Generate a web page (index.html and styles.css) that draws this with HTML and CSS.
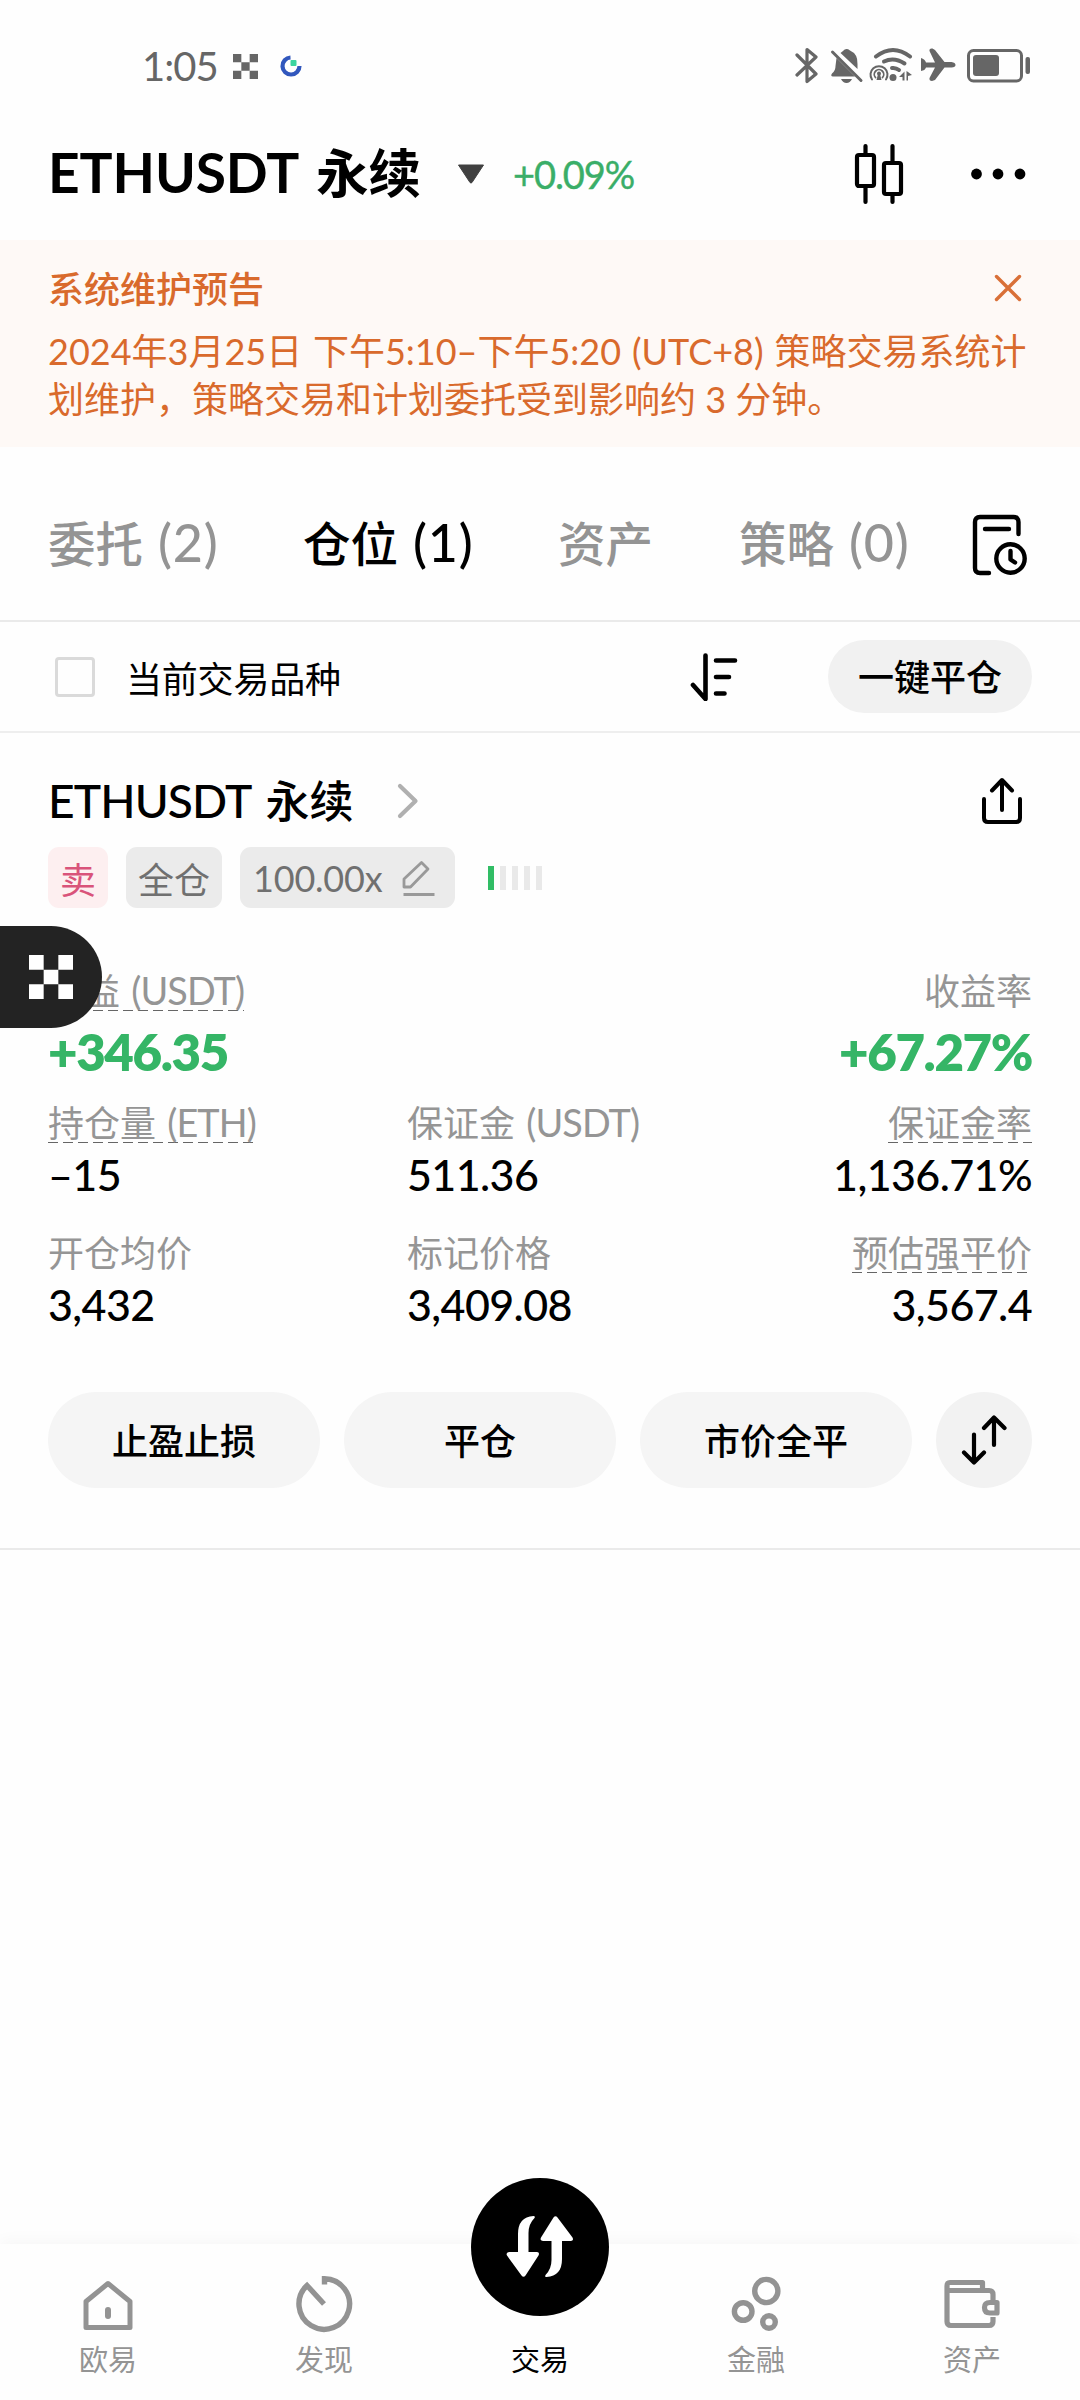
FILE: index.html
```html
<!DOCTYPE html>
<html lang="zh-CN">
<head>
<meta charset="utf-8">
<title>ETHUSDT 永续</title>
<link rel="stylesheet" href="styles.css">
</head>
<body>
<div class="app">
  <div class="status">
    <div class="status-left">
      <span class="clock">1:05</span>
      <svg class="okx-mini" width="25" height="25" viewBox="0 0 3 3" fill="#666"><path d="M0 0h1v1H0zM2 0h1v1H2zM1 1h1v1H1zM0 2h1v1H0zM2 2h1v1H2z"/></svg>
      <svg width="22" height="22" viewBox="0 0 22 22"><path d="M10.500 2.500A8.500 8.500 0 1 0 19.500 11" fill="none" stroke="#3157bd" stroke-width="4.200"/><rect x="10.500" y="5" width="6" height="6" rx="1" fill="#3bd4a0"/></svg>
    </div>
    <svg class="status-icons" width="236" height="38" viewBox="795 46 236 38" fill="#666">
      <path d="M797 55L816 74L807 81.500V49.500L816 57L797 75" fill="none" stroke="#666" stroke-width="3.200" stroke-linejoin="round" stroke-linecap="round"/>
      <path d="M843 51Q846 47.500 850 50.500Q858 54 857.500 64V69L840.500 53ZM836.500 58L855 76.500H833Q830 76 832 73.500Q835.500 71 835.500 66Z"/>
      <path d="M832.500 52L861 80.500" stroke="#666" stroke-width="3" stroke-linecap="round"/>
      <path d="M841 79H852Q850 83 846.500 83Q843 83 841 79Z"/>
      <g fill="none" stroke="#666" stroke-linecap="round">
        <path d="M876 56.500Q893 43.500 910 56.500" stroke-width="4"/>
        <path d="M884 61.500Q894 56.500 904.500 63.500" stroke-width="4"/>
        <path d="M892 68Q896 67.500 899 70" stroke-width="4"/>
        <path d="M872 79.500A8.500 8.500 0 1 1 886 79.500" stroke-width="2"/>
        <path d="M875.500 77.500A4.700 4.700 0 1 1 882.500 77.500" stroke-width="1.800"/>
      </g>
      <circle cx="879" cy="73.500" r="2"/><path d="M878 74h2l1.500 6h-5z"/><circle cx="893" cy="77.500" r="3.500"/>
      <path d="M899 77L904.500 71.500V80.500H902.500V77ZM906.500 71V80.500L908 80.500V76L912 75L908 72Z"/>
      <path d="M921 58Q925 59 926 62.500H935L929.500 51Q929 48 932.500 48.500L935 50L944.500 62H951.500Q955.500 62.500 955.500 65Q955.500 67 951.500 67.500H944.500L935 80L932 81Q929 81 929.500 78L935 67.500H926Q925 70.500 921 71Z"/>
      <rect x="968.500" y="50.500" width="53" height="30.500" rx="5" fill="none" stroke="#666" stroke-width="3"/>
      <rect x="973" y="55" width="26" height="21" rx="3"/><rect x="1025.500" y="57" width="4.500" height="17" rx="2"/>
    </svg>
  </div>

  <header class="header">
    <h1 class="pair"><span class="lat">ETHUSDT</span> 永续</h1>
    <svg class="caret" width="28" height="20" viewBox="0 0 28 20"><path d="M1.500 1h25L15 18.500q-1 1-2 0z" fill="#404040" stroke="#404040" stroke-linejoin="round"/></svg>
    <span class="change">+0.09%</span>
    <svg class="candles" width="50" height="62" viewBox="0 0 50 62" fill="none" stroke="#000" stroke-width="4.200" stroke-linecap="round"><rect x="3" y="12" width="17" height="31" rx="2"/><rect x="30" y="20" width="17" height="31" rx="2"/><path d="M11.500 3v9M11.500 43v16M38.500 3v17M38.500 51v8"/></svg>
    <svg class="more" width="56" height="12" viewBox="0 0 56 12"><circle cx="6.500" cy="6" r="5.400"/><circle cx="28" cy="6" r="5.400"/><circle cx="50" cy="6" r="5.400"/></svg>
  </header>

  <section class="notice">
    <div class="notice-head">
      <h2>系统维护预告</h2>
      <svg width="28" height="28" viewBox="0 0 28 28" fill="none" stroke="#d97038" stroke-width="3.400" stroke-linecap="round"><path d="M2.500 2.500l23 23M25.500 2.500l-23 23"/></svg>
    </div>
    <p><span class="line line-a">2024年3月25日 下午5:10–下午5:20 (UTC+8) 策略交易系统计</span><span class="line line-b">划维护，策略交易和计划委托受到影响约 3 分钟。</span></p>
  </section>

  <nav class="tabs">
    <span class="tab counted">委托 <span class="count">(2)</span></span>
    <span class="tab counted active">仓位 <span class="count">(1)</span></span>
    <span class="tab">资产</span>
    <span class="tab counted">策略 <span class="count">(0)</span></span>
    <svg class="history" width="56" height="62" viewBox="0 0 56 62" fill="none" stroke="#000" stroke-width="4.400" stroke-linecap="round" stroke-linejoin="round"><path d="M46.500 20V8q0-5-5-5H8Q3 3 3 8v46q0 5 5 5h9M13 15h24"/><circle cx="38.500" cy="44.500" r="14.200"/><path d="M38.500 37v8.500l4.500 3"/></svg>
  </nav>

  <div class="filter">
    <span class="checkbox"></span>
    <span class="filter-label">当前交易品种</span>
    <svg class="sort" width="48" height="48" viewBox="0 0 48 48" fill="none" stroke="#000" stroke-width="4.600" stroke-linecap="round" stroke-linejoin="round"><path d="M3 32l12.500 14V2.500M26 7.500h19M26 24h13M26 40.500h8.500"/></svg>
    <button class="close-all">一键平仓</button>
  </div>

  <section class="position">
    <div class="pos-head">
      <h3><span class="lat">ETHUSDT</span> 永续</h3>
      <svg class="chev" width="22" height="36" viewBox="0 0 22 36" fill="none" stroke="#b0b0b0" stroke-width="4.200" stroke-linecap="round" stroke-linejoin="round"><path d="M3 3l15.500 15L3 33"/></svg>
      <svg class="share" width="42" height="48" viewBox="0 0 42 48" fill="none" stroke="#000" stroke-width="4" stroke-linecap="round" stroke-linejoin="round"><path d="M3 22v19q0 4 4 4h28q4 0 4-4V22M21 33V3.500M11 13.500l10-10.500 10 10.500"/></svg>
    </div>

    <div class="tags">
      <span class="tag sell">卖</span>
      <span class="tag">全仓</span>
      <span class="tag lever"><span class="lever-num">100.00x</span>
        <svg width="34" height="38" viewBox="0 0 34 38" fill="none" stroke="#999" stroke-width="2.800" stroke-linejoin="round"><path d="M2 28v-8L19.500 3.500l6.500 6.500L8.500 28zM1.500 35.500h31"/></svg></span>
      <span class="risk"><i class="on"></i><i></i><i></i><i></i><i></i></span>
    </div>

    <div class="grid">
      <div class="cell wide"><span class="label dash">收益 <span class="lat">(USDT)</span></span><b class="pnl">+346.35</b></div>
      <div class="cell right"><span class="label">收益率</span><b class="pnl">+67.27%</b></div>
      <div class="cell"><span class="label dash">持仓量 <span class="lat">(ETH)</span></span><span class="value">–15</span></div>
      <div class="cell"><span class="label">保证金 <span class="lat">(USDT)</span></span><span class="value">511.36</span></div>
      <div class="cell right"><span class="label dash">保证金率</span><span class="value">1,136.71%</span></div>
      <div class="cell"><span class="label">开仓均价</span><span class="value">3,432</span></div>
      <div class="cell"><span class="label">标记价格</span><span class="value">3,409.08</span></div>
      <div class="cell right"><span class="label dash">预估强平价</span><span class="value">3,567.4</span></div>
    </div>

    <div class="actions">
      <button>止盈止损</button>
      <button>平仓</button>
      <button>市价全平</button>
      <button class="flip" aria-label="反手"><svg width="46" height="52" viewBox="0 0 46 52" fill="none" stroke="#000" stroke-width="4.200" stroke-linecap="round" stroke-linejoin="round"><path d="M13 20.500V48M3 38.500L13 48.500l10-10M33 31V4M23 14L33 3.500 43.500 14"/></svg></button>
    </div>
  </section>

  <div class="float"><svg width="44" height="44" viewBox="0 0 3 3" fill="#fff"><path d="M0 0h1v1H0zM2 0h1v1H2zM1 1h1v1H1zM0 2h1v1H0zM2 2h1v1H2z"/></svg></div>

  <footer class="bottom">
    <div class="item">
      <svg width="60" height="60" viewBox="78 2274 60 60" fill="none" stroke="#939393" stroke-width="5" stroke-linejoin="round"><path d="M86 2301.500L108 2283.500L130 2301.500V2327.500H86Z"/><path d="M108 2310v6" stroke-width="6" stroke-linecap="round"/></svg>
      <span>欧易</span>
    </div>
    <div class="item">
      <svg width="60" height="60" viewBox="294 2274 60 60" fill="none" stroke="#939393" stroke-width="5.400"><path d="M324.500 2284.500V2278.700A25.300 25.300 0 1 1 307 2285.500L324 2304"/></svg>
      <span>发现</span>
    </div>
    <div class="item main">
      <span class="trade"><svg width="138" height="138" viewBox="471 2178 138 138" fill="#fff"><path d="M518 2252V2234Q518 2217 533.500 2216Q535.500 2216 534.500 2218Q528.500 2224 528.500 2233V2252H537Q540 2252.500 538.500 2255.500L525.500 2275.500Q523.500 2278 521.500 2275.500L507 2255.500Q505.500 2252.500 509 2252Z"/><path d="M551.500 2241V2260Q551.500 2269 545.500 2275Q544.500 2277 546.500 2277Q562 2276 562 2259V2241H571Q574 2240.500 572.500 2237.500L557.500 2217.500Q555.500 2215 553.500 2217.500L541 2237.500Q539.500 2240.500 543 2241Z"/></svg></span>
      <span>交易</span>
    </div>
    <div class="item">
      <svg width="60" height="60" viewBox="726 2274 60 60" fill="none" stroke="#939393" stroke-width="5.400"><circle cx="766.300" cy="2291" r="11.600"/><circle cx="743.200" cy="2311.500" r="8.800"/><circle cx="769" cy="2322" r="6.300"/></svg>
      <span>金融</span>
    </div>
    <div class="item">
      <svg width="60" height="60" viewBox="942 2274 60 60" fill="none" stroke="#939393" stroke-width="5.200" stroke-linejoin="round"><path d="M982.500 2289V2282.500H950Q947 2282.500 947 2286V2321.500Q947 2325.500 951 2325.500H989Q993 2325.500 993 2321.500V2317M993 2300V2294.500Q993 2290.500 989 2290.500H947"/><path d="M997 2302.500H990Q984.500 2302.500 984.500 2307.500Q984.500 2313 990 2313H997Z"/></svg>
      <span>资产</span>
    </div>
  </footer>
</div>
</body>
</html>
```
FILE: styles.css
```css
* { box-sizing: border-box; margin: 0; padding: 0; }
body { background: #fff; color: #000; font-family: Lato, "Noto Sans CJK SC", sans-serif; font-size: 36px; }
svg { display: block; flex: none; }
button { border: 0; font: inherit; color: inherit; white-space: nowrap; }
.app { position: relative; display: flex; flex-direction: column; width: 1080px; height: 2400px; overflow: hidden; background: #fefefe; white-space: nowrap; }
.lat { font-size: 1.05em; line-height: 0; }

.status { display: flex; justify-content: space-between; height: 108px; padding: 46px 49px 0 142px; }
.status-left { display: flex; align-items: center; height: 40px; color: #666; }
.clock { width: 91px; font-size: 40px; line-height: 40px; letter-spacing: -1px; }
.okx-mini { margin-right: 22px; }

.header { display: flex; align-items: center; height: 132px; padding-left: 48px; }
.pair { width: 409px; padding-bottom: 2px; font-size: 52.500px; font-weight: 700; line-height: 60px; word-spacing: 4px; }
.pair .lat { letter-spacing: -.1px; }
.caret { margin-right: 28px; }
.change { width: 341px; font-size: 38px; color: #3aae68; letter-spacing: -1.100px; -webkit-text-stroke: .4px; }
.candles { margin-right: 66px; }

.notice { height: 207px; padding: 24px 48px 0; background: #fef9f6; color: #d96a2c; }
.notice-head { display: flex; justify-content: space-between; align-items: center; height: 48px; padding-right: 10px; }
.notice h2 { padding-bottom: 2px; font-size: 36px; font-weight: 500; }
.notice p { padding-top: 15px; line-height: 48px; }
.line { display: block; }
.line-a { word-spacing: 1.600px; }

.tabs { display: flex; align-items: center; gap: 84px; height: 173px; padding: 16px 48px 0; font-size: 47.500px; font-weight: 500; color: #949494; }
.tab { width: 97px; }
.tab.counted { width: 171px; word-spacing: 3px; }
.count { font-size: 52px; line-height: 0; letter-spacing: .8px; }
.tab.active { color: #000; }
.history { margin: 7px 0 0 -22px; }

.filter { display: flex; align-items: center; height: 113px; padding: 0 48px 0 55px; border-top: 2px solid #eaeaea; border-bottom: 2px solid #eee; }
.checkbox { width: 40px; height: 40px; margin-right: 31px; border: 3px solid #dadada; border-radius: 4px; }
.filter-label { width: 564px; letter-spacing: -.2px; }
.sort { margin-right: 90px; }
.close-all { width: 204px; height: 73px; padding-bottom: 3px; border-radius: 37px; background: #f1f1f1; font-weight: 500; }

.position { height: 817px; padding: 40px 48px 0; border-bottom: 2px solid #eaeaea; }
.pos-head { display: flex; align-items: center; height: 56px; }
.pos-head h3 { width: 349px; padding-bottom: 4px; font-size: 44px; font-weight: 500; word-spacing: 3px; }
.pos-head .lat { letter-spacing: -.900px; }
.share { margin-left: auto; margin-right: 9px; }
.tags { display: flex; align-items: center; height: 61px; margin-top: 18px; gap: 18px; color: #707070; }
.tag { display: flex; align-items: center; justify-content: center; height: 61px; padding: 0 12px; border-radius: 11px; background: #ebebeb; }
.sell { background: #fdeff0; color: #d9537a; }
.lever { width: 215px; justify-content: space-between; padding: 0 19px 0 13px; }
.lever-num { letter-spacing: -.200px; }
.risk { display: flex; gap: 6px; margin-left: 15px; }
.risk i { width: 6px; height: 24px; background: #e9e9e9; }
.risk .on { background: #31bd65; }

.grid { display: grid; grid-template-columns: 359px 300px 1fr; grid-template-rows: 132px 130px 130px; margin-top: 59px; }
.cell { display: flex; flex-direction: column; align-items: flex-start; }
.cell.wide { grid-column: span 2; }
.cell.right { align-items: flex-end; }
.label { height: 44px; line-height: 48px; color: #959595; word-spacing: 2px; }
.label .lat { letter-spacing: -.900px; }
.dash { background: repeating-linear-gradient(90deg, #666 0 10px, transparent 10px 15px) left bottom / 100% 1px no-repeat; }
.pnl { margin-top: 13px; font-size: 51px; line-height: 56px; font-weight: 800; letter-spacing: -1.400px; color: #35b566; }
.value { margin-top: 10px; font-size: 43px; line-height: 44px; font-weight: 500; letter-spacing: -.600px; }

.actions { display: flex; gap: 24px; margin-top: 33px; }
.actions button { flex: 1; height: 96px; padding-bottom: 3px; border-radius: 48px; background: #f5f5f5; font-weight: 500; }
.actions .flip { flex: 0 0 96px; display: flex; align-items: center; justify-content: center; padding: 0; background: #f2f2f2; }

.float { position: absolute; left: 0; top: 926px; display: flex; align-items: center; width: 102px; height: 102px; padding-left: 29px; border-radius: 0 51px 51px 0; background: #232323; }

.bottom { display: grid; grid-template-columns: repeat(5, 216px); height: 156px; margin-top: auto; background: #fefefe; box-shadow: 0 -4px 14px rgba(0, 0, 0, .03); }
.item { display: flex; flex-direction: column; align-items: center; height: 156px; padding-top: 30px; gap: 5px; font-size: 29px; line-height: 42px; color: #949494; }
.main { padding-top: 0; margin-top: -66px; height: 222px; gap: 23px; color: #000; }
.trade { width: 138px; height: 138px; border-radius: 50%; background: #000; }
```
